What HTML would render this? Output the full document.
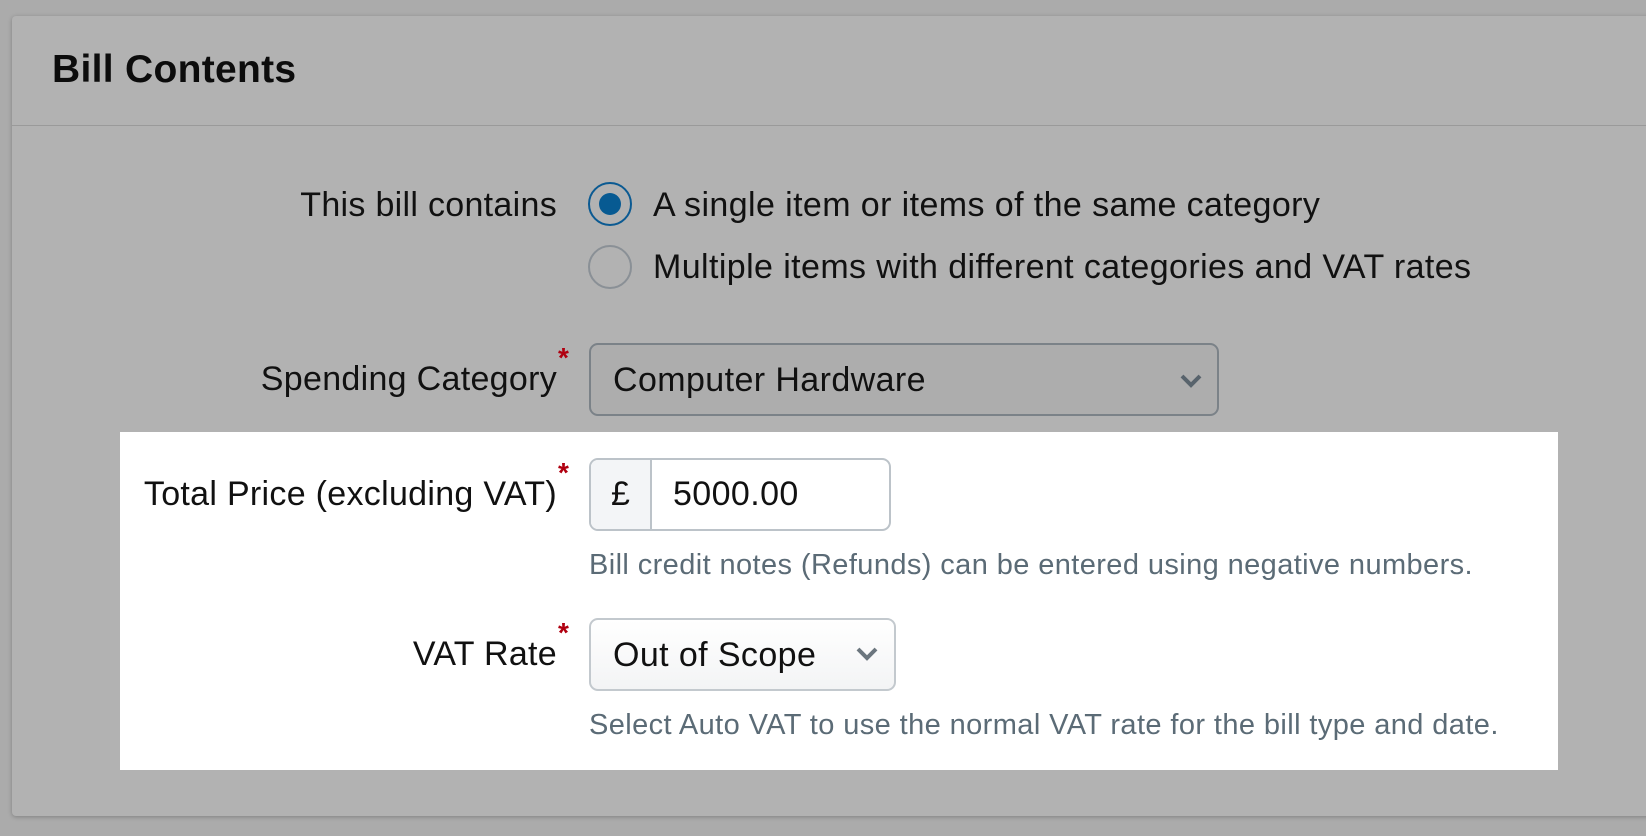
<!DOCTYPE html>
<html><head><style>
*{box-sizing:border-box;margin:0;padding:0}
body{width:1646px;height:836px;background:#ababab;font-family:"Liberation Sans",sans-serif;position:relative;overflow:hidden;color:#111}
.panel{position:absolute;left:12px;top:16px;width:1640px;height:800px;background:#b2b2b2;box-shadow:0 1px 4px rgba(0,0,0,.25);border-radius:4px}
.abs{position:absolute}
.hdr{left:52px;top:48px;font-size:39px;font-weight:bold;color:#0c0c0c;letter-spacing:0.3px}
.line{left:12px;top:125px;width:1640px;height:1px;background:#9a9a9a}
.lbl{font-size:34px;letter-spacing:0.3px;text-align:right;right:calc(1646px - 557px);white-space:nowrap;line-height:40px}
.opt{font-size:34px;letter-spacing:0.4px;left:653px;line-height:40px;white-space:nowrap}
.radio{width:44px;height:44px;border-radius:50%;left:588px}
.ast{color:#b00010;font-size:28px;font-weight:bold;left:558px}
.white{left:120px;top:432px;width:1438px;height:338px;background:#fff}
.help{font-size:29px;letter-spacing:0.4px;color:#5b6b76;left:589px;white-space:nowrap}
.sel{border-radius:9px;font-size:34px;letter-spacing:0.4px;padding-left:22px;line-height:70px}
.chev{position:absolute;width:24px;height:16px}
</style></head><body>
<div class="panel"></div>
<div class="abs hdr">Bill Contents</div>
<div class="abs line"></div>

<div class="abs lbl" style="top:185px">This bill contains</div>
<div class="abs radio" style="top:182px;border:2px solid #0b5a92;background:#b2b2b2"><div style="position:absolute;left:9px;top:9px;width:22px;height:22px;border-radius:50%;background:#075a92"></div></div>
<div class="abs opt" style="top:185px">A single item or items of the same category</div>
<div class="abs radio" style="top:245px;border:2px solid #8a9096"></div>
<div class="abs opt" style="top:247px">Multiple items with different categories and VAT rates</div>

<div class="abs lbl" style="top:359px">Spending Category</div>
<div class="abs ast" style="top:342px">*</div>
<div class="abs sel" style="left:589px;top:343px;width:630px;height:73px;border:2px solid #7b8288;background:#adadad">Computer Hardware
<svg class="chev" style="left:588px;top:28px" viewBox="0 0 24 16"><path d="M3 3 L12 12 L21 3" fill="none" stroke="#58636c" stroke-width="4"/></svg></div>

<div class="abs white"></div>
<div class="abs lbl" style="top:474px">Total Price (excluding VAT)</div>
<div class="abs ast" style="top:457px">*</div>
<div class="abs" style="left:589px;top:458px;width:302px;height:73px;border:2px solid #bcc3c9;border-radius:9px;overflow:hidden;background:#fff">
<div style="position:absolute;left:0;top:0;width:61px;height:100%;background:#f3f5f7;border-right:2px solid #bcc3c9;font-size:34px;line-height:69px;text-align:center">£</div>
<div style="position:absolute;left:82px;top:0;font-size:34px;letter-spacing:0.4px;line-height:69px">5000.00</div></div>
<div class="abs help" style="top:549px">Bill credit notes (Refunds) can be entered using negative numbers.</div>

<div class="abs lbl" style="top:634px">VAT Rate</div>
<div class="abs ast" style="top:617px">*</div>
<div class="abs sel" style="left:589px;top:618px;width:307px;height:73px;border:2px solid #c3c9ce;background:linear-gradient(#fff,#f3f4f5)">Out of Scope
<svg class="chev" style="left:264px;top:26px" viewBox="0 0 24 16"><path d="M3 3 L12 12 L21 3" fill="none" stroke="#6b767e" stroke-width="4"/></svg></div>
<div class="abs help" style="top:709px">Select Auto VAT to use the normal VAT rate for the bill type and date.</div>
</body></html>
